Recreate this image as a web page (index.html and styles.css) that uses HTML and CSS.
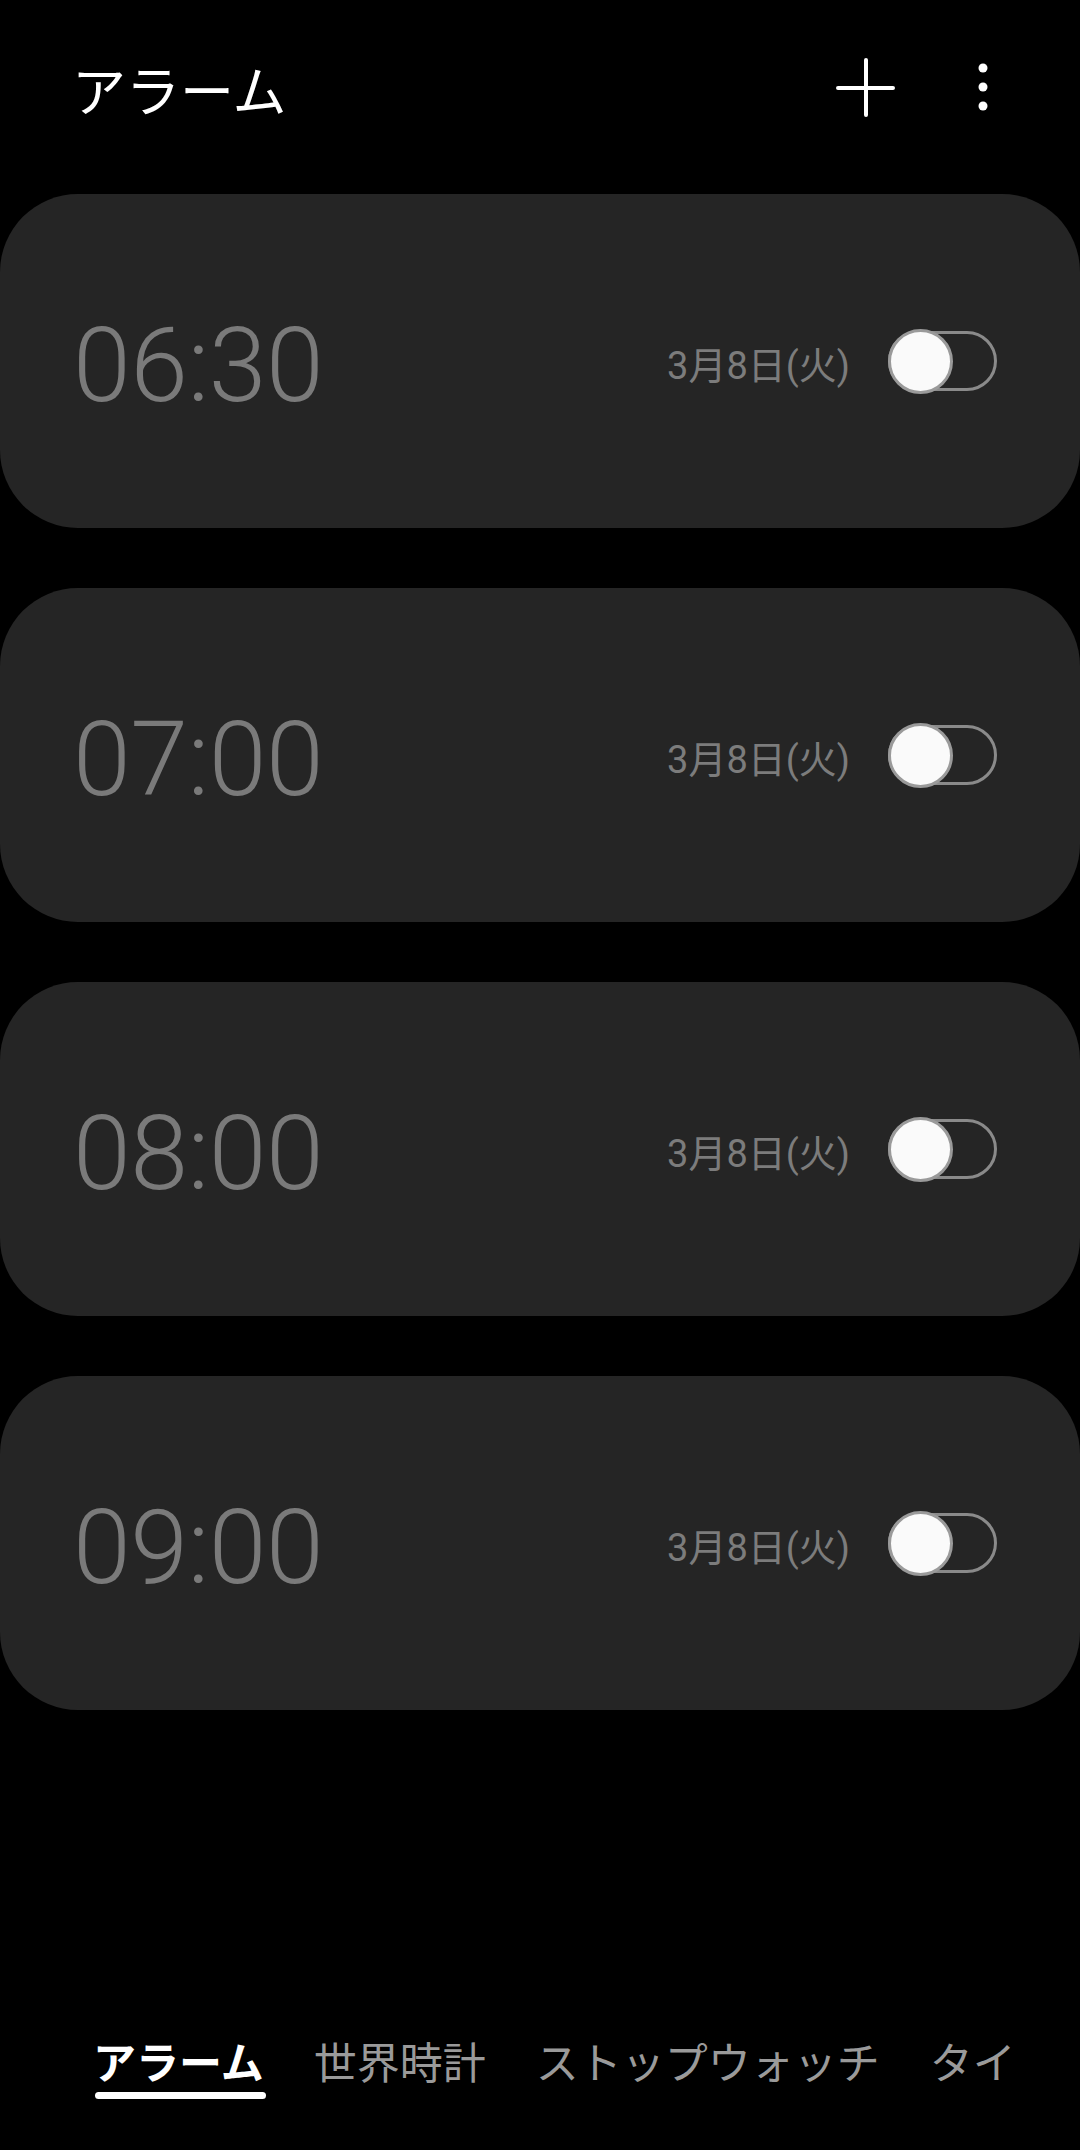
FILE: index.html
```html
<!DOCTYPE html>
<html lang="ja">
<head>
  <meta charset="UTF-8" />
  <meta name="viewport" content="width=device-width, initial-scale=1.0"/>
  <title>アラーム</title>
  <link rel="stylesheet" href="styles.css">
</head>
<body>

  <div class="page">
    <div class="header">
      <h1 class="title">アラーム</h1>
      <div class="actions">
        <svg class="icon-plus" width="60" height="60" viewBox="0 0 60 60">
          <path d="M30 2 V57 M2 30 H57" stroke="#fff" stroke-width="4" stroke-linecap="round" fill="none"/>
        </svg>
        <svg class="icon-more" width="24" height="60" viewBox="0 0 24 60">
          <circle cx="12" cy="11" r="4.5" fill="#fff"/>
          <circle cx="12" cy="30" r="4.5" fill="#fff"/>
          <circle cx="12" cy="49" r="4.5" fill="#fff"/>
        </svg>
      </div>
    </div>

    <div class="alarm-list">
      <div class="alarm-card">
        <div class="alarm-time">06:30</div>
        <div class="alarm-right">
          <span class="alarm-date">3月8日(火)</span>
          <div class="toggle"></div>
        </div>
      </div>
      <div class="alarm-card">
        <div class="alarm-time">07:00</div>
        <div class="alarm-right">
          <span class="alarm-date">3月8日(火)</span>
          <div class="toggle"></div>
        </div>
      </div>
      <div class="alarm-card">
        <div class="alarm-time">08:00</div>
        <div class="alarm-right">
          <span class="alarm-date">3月8日(火)</span>
          <div class="toggle"></div>
        </div>
      </div>
      <div class="alarm-card">
        <div class="alarm-time">09:00</div>
        <div class="alarm-right">
          <span class="alarm-date">3月8日(火)</span>
          <div class="toggle"></div>
        </div>
      </div>
    </div>

    <div class="tabbar">
      <div class="tabs">
        <div class="tab active">アラーム</div>
        <div class="tab">世界時計</div>
        <div class="tab">ストップウォッチ</div>
        <div class="tab">タイマー</div>
      </div>
    </div>
  </div>

</body>
</html>
```

FILE: styles.css
```css
body {
  margin: 0;
  background: #000;
  font-family: "Noto Sans CJK JP", sans-serif;
  color: #fff;
}

.page {
  min-height: 100vh;
  display: flex;
  flex-direction: column;
}

.header {
  height: 176px;
  display: flex;
  align-items: center;
  justify-content: space-between;
  padding: 0 85px 0 72px;
}

.title {
  margin: 0;
  font-size: 54px;
  font-weight: 400;
  line-height: 1;
  padding-top: 2px;
}

.actions {
  display: flex;
  align-items: center;
  gap: 75px;
}

.icon-plus,
.icon-more {
  display: block;
}

.icon-more {
  margin-top: -2px;
}

.alarm-list {
  display: flex;
  flex-direction: column;
  gap: 60px;
  padding-top: 18px;
}

.alarm-card {
  height: 334px;
  background: #252525;
  border-radius: 78px;
  display: flex;
  align-items: center;
  justify-content: space-between;
  padding: 0 83px 0 73px;
}

.alarm-time {
  font-family: Roboto, sans-serif;
  font-weight: 300;
  font-size: 104px;
  color: #7a7a7a;
  letter-spacing: -0.5px;
  margin-top: 8px;
}

.alarm-right {
  display: flex;
  align-items: center;
}

.alarm-date {
  font-family: Roboto, "Noto Sans CJK JP", sans-serif;
  font-size: 38px;
  color: #7c7c7c;
  margin-right: 38px;
  margin-top: 2px;
}

.toggle {
  position: relative;
  width: 109px;
  height: 60px;
  box-sizing: border-box;
  border: 3px solid #8a8a8a;
  border-radius: 30px;
}

.toggle::before {
  content: "";
  position: absolute;
  left: -3px;
  top: -5.5px;
  width: 65px;
  height: 65px;
  box-sizing: border-box;
  border-radius: 50%;
  background: #fafafa;
  border: 3px solid #9a9a9a;
}

.tabbar {
  margin-top: auto;
  padding: 0 0 51px 93px;
}

.tabs {
  width: 924px;
  overflow: hidden;
  display: flex;
  gap: 50px;
  white-space: nowrap;
}

.tab {
  flex-shrink: 0;
  font-size: 43px;
  line-height: normal;
  color: #9a9a9a;
  padding-bottom: 8px;
}

.tab.active {
  color: #fff;
  font-weight: 700;
  padding-bottom: 0;
}

.tab.active::after {
  content: "";
  display: block;
  height: 7px;
  margin: 1px -2px 0 2px;
  background: #fff;
  border-radius: 4px;
}
```
